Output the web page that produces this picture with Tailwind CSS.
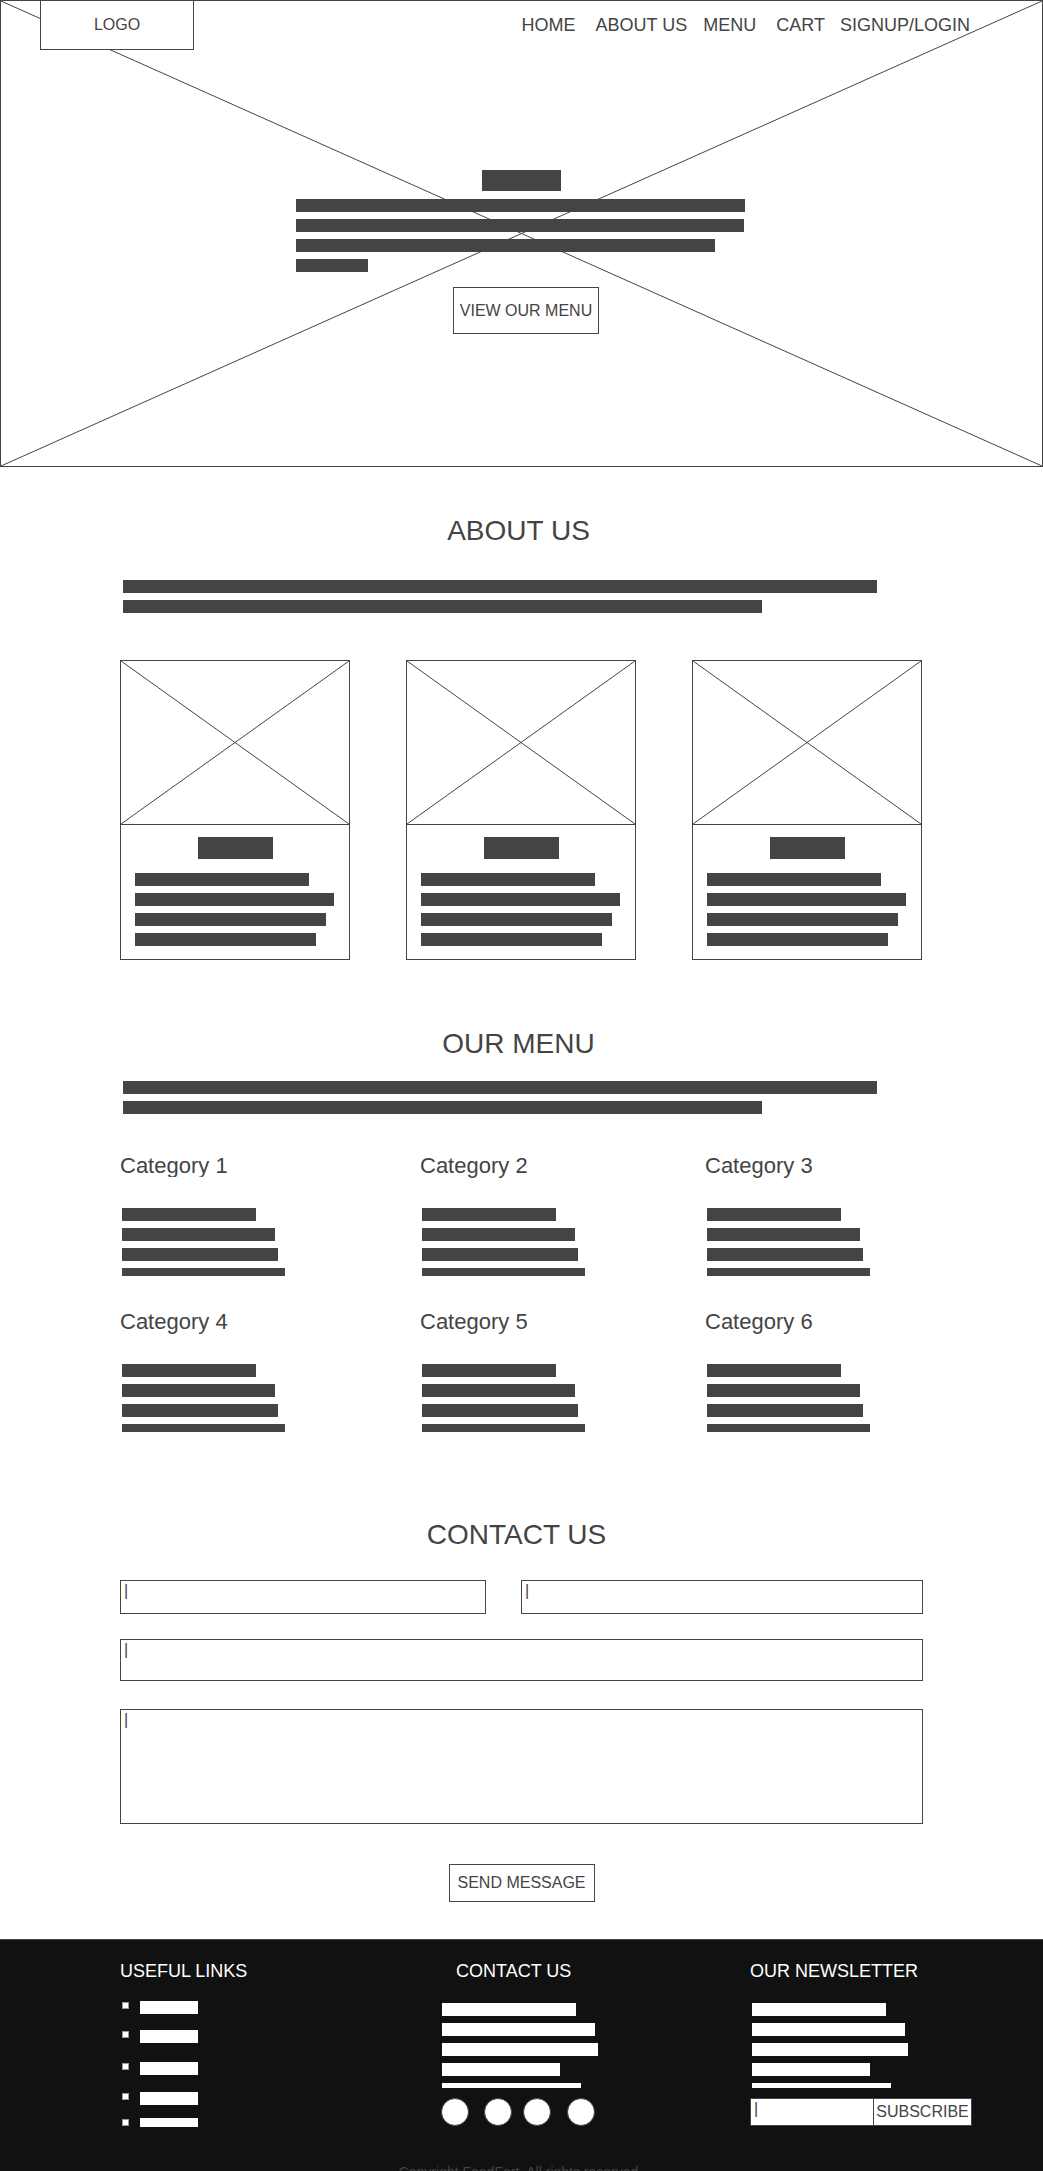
<!DOCTYPE html>
<html lang="en">
<head>
<meta charset="utf-8">
<meta name="viewport" content="width=device-width, initial-scale=1">
<title>FoodFort</title>
<script src="https://cdn.jsdelivr.net/npm/@tailwindcss/browser@4"></script>
</head>
<body class="bg-white font-['Liberation_Sans',Arial,sans-serif] text-[#444]">

<header class="relative h-[467px] border border-[#444]">
  <svg class="absolute inset-0 h-full w-full" viewBox="0 0 100 100" preserveAspectRatio="none" fill="none" stroke="#444" stroke-width="1" aria-hidden="true">
    <path d="M0 0L100 100M100 0L0 100" vector-effect="non-scaling-stroke"/>
  </svg>
  <div class="relative -mt-px flex items-start justify-between pr-[72px] pl-[39px]">
    <a href="#" class="flex h-[50px] w-[154px] items-center justify-center border border-[#444] bg-white text-base">LOGO</a>
    <nav class="flex pt-[13px] text-lg leading-6">
      <a href="#">HOME</a>
      <a href="#about" class="ml-5">ABOUT US</a>
      <a href="#menu" class="ml-4">MENU</a>
      <a href="#" class="ml-5">CART</a>
      <a href="#" class="ml-[15px]">SIGNUP/LOGIN</a>
    </nav>
  </div>
  <div class="relative mx-auto mt-[120px] flex w-[451px] max-w-full flex-col items-start gap-[7px]">
    <div class="mb-px ml-[186px] h-[21px] w-[79px] bg-[#444]"></div>
    <div class="h-[13px] w-[449px] bg-[#444]"></div>
    <div class="h-[13px] w-[448px] bg-[#444]"></div>
    <div class="h-[13px] w-[419px] bg-[#444]"></div>
    <div class="h-[13px] w-[72px] bg-[#444]"></div>
    <button class="mt-2 ml-[157px] h-[47px] w-[146px] border border-[#444] bg-white text-base whitespace-nowrap">VIEW OUR MENU</button>
  </div>
</header>

<main class="px-[120px]">
  <section id="about" class="pt-12">
    <h2 class="pr-1.5 text-center text-[28px] leading-8">ABOUT US</h2>
    <div class="mt-[33px] flex flex-col gap-[7px] pl-[3px]">
      <div class="h-[13px] w-[754px] max-w-full bg-[#444]"></div>
      <div class="h-[13px] w-[639px] max-w-full bg-[#444]"></div>
    </div>
    <div class="mt-[47px] grid grid-cols-3 gap-14 pr-px">
      <article class="border border-[#444]">
        <svg class="block h-[164px] w-full border-b border-[#444]" viewBox="0 0 100 100" preserveAspectRatio="none" fill="none" stroke="#444" aria-hidden="true"><path d="M0 0L100 100M100 0L0 100" vector-effect="non-scaling-stroke"/></svg>
        <div class="flex flex-col gap-[7px] px-3.5 pt-3 pb-[13px]">
          <div class="mb-[7px] h-[22px] w-[75px] self-center bg-[#444]"></div>
          <div class="h-[13px] w-[174px] bg-[#444]"></div>
          <div class="h-[13px] w-[199px] bg-[#444]"></div>
          <div class="h-[13px] w-[191px] bg-[#444]"></div>
          <div class="h-[13px] w-[181px] bg-[#444]"></div>
        </div>
      </article>
      <article class="border border-[#444]">
        <svg class="block h-[164px] w-full border-b border-[#444]" viewBox="0 0 100 100" preserveAspectRatio="none" fill="none" stroke="#444" aria-hidden="true"><path d="M0 0L100 100M100 0L0 100" vector-effect="non-scaling-stroke"/></svg>
        <div class="flex flex-col gap-[7px] px-3.5 pt-3 pb-[13px]">
          <div class="mb-[7px] h-[22px] w-[75px] self-center bg-[#444]"></div>
          <div class="h-[13px] w-[174px] bg-[#444]"></div>
          <div class="h-[13px] w-[199px] bg-[#444]"></div>
          <div class="h-[13px] w-[191px] bg-[#444]"></div>
          <div class="h-[13px] w-[181px] bg-[#444]"></div>
        </div>
      </article>
      <article class="border border-[#444]">
        <svg class="block h-[164px] w-full border-b border-[#444]" viewBox="0 0 100 100" preserveAspectRatio="none" fill="none" stroke="#444" aria-hidden="true"><path d="M0 0L100 100M100 0L0 100" vector-effect="non-scaling-stroke"/></svg>
        <div class="flex flex-col gap-[7px] px-3.5 pt-3 pb-[13px]">
          <div class="mb-[7px] h-[22px] w-[75px] self-center bg-[#444]"></div>
          <div class="h-[13px] w-[174px] bg-[#444]"></div>
          <div class="h-[13px] w-[199px] bg-[#444]"></div>
          <div class="h-[13px] w-[191px] bg-[#444]"></div>
          <div class="h-[13px] w-[181px] bg-[#444]"></div>
        </div>
      </article>
    </div>
  </section>

  <section id="menu" class="pt-[68px]">
    <h2 class="pr-1.5 text-center text-[28px] leading-8">OUR MENU</h2>
    <div class="mt-[21px] flex flex-col gap-[7px] pl-[3px]">
      <div class="h-[13px] w-[754px] max-w-full bg-[#444]"></div>
      <div class="h-[13px] w-[639px] max-w-full bg-[#444]"></div>
    </div>
    <div class="mt-10 grid grid-cols-[300fr_285fr_218fr] gap-y-[34px]">
      <div>
        <h3 class="h-[23px] overflow-hidden text-[22px] leading-6">Category 1</h3>
        <div class="mt-[31px] flex flex-col gap-[7px] pl-0.5">
          <div class="h-[13px] w-[134px] bg-[#444]"></div>
          <div class="h-[13px] w-[153px] bg-[#444]"></div>
          <div class="h-[13px] w-[156px] bg-[#444]"></div>
          <div class="h-2 w-[163px] bg-[#444]"></div>
        </div>
      </div>
      <div>
        <h3 class="h-[23px] text-[22px] leading-6">Category 2</h3>
        <div class="mt-[31px] flex flex-col gap-[7px] pl-0.5">
          <div class="h-[13px] w-[134px] bg-[#444]"></div>
          <div class="h-[13px] w-[153px] bg-[#444]"></div>
          <div class="h-[13px] w-[156px] bg-[#444]"></div>
          <div class="h-2 w-[163px] bg-[#444]"></div>
        </div>
      </div>
      <div>
        <h3 class="h-[23px] text-[22px] leading-6">Category 3</h3>
        <div class="mt-[31px] flex flex-col gap-[7px] pl-0.5">
          <div class="h-[13px] w-[134px] bg-[#444]"></div>
          <div class="h-[13px] w-[153px] bg-[#444]"></div>
          <div class="h-[13px] w-[156px] bg-[#444]"></div>
          <div class="h-2 w-[163px] bg-[#444]"></div>
        </div>
      </div>
      <div>
        <h3 class="h-[23px] text-[22px] leading-6">Category 4</h3>
        <div class="mt-[31px] flex flex-col gap-[7px] pl-0.5">
          <div class="h-[13px] w-[134px] bg-[#444]"></div>
          <div class="h-[13px] w-[153px] bg-[#444]"></div>
          <div class="h-[13px] w-[156px] bg-[#444]"></div>
          <div class="h-2 w-[163px] bg-[#444]"></div>
        </div>
      </div>
      <div>
        <h3 class="h-[23px] text-[22px] leading-6">Category 5</h3>
        <div class="mt-[31px] flex flex-col gap-[7px] pl-0.5">
          <div class="h-[13px] w-[134px] bg-[#444]"></div>
          <div class="h-[13px] w-[153px] bg-[#444]"></div>
          <div class="h-[13px] w-[156px] bg-[#444]"></div>
          <div class="h-2 w-[163px] bg-[#444]"></div>
        </div>
      </div>
      <div>
        <h3 class="h-[23px] text-[22px] leading-6">Category 6</h3>
        <div class="mt-[31px] flex flex-col gap-[7px] pl-0.5">
          <div class="h-[13px] w-[134px] bg-[#444]"></div>
          <div class="h-[13px] w-[153px] bg-[#444]"></div>
          <div class="h-[13px] w-[156px] bg-[#444]"></div>
          <div class="h-2 w-[163px] bg-[#444]"></div>
        </div>
      </div>
    </div>
  </section>

  <section id="contact" class="pt-[87px] pb-[37px]">
    <h2 class="pr-2.5 text-center text-[28px] leading-8">CONTACT US</h2>
    <form class="mt-[29px] flex flex-col">
      <div class="grid grid-cols-[366fr_402fr] gap-[35px]">
        <input type="text" aria-label="Name" value="|" class="block h-[34px] w-full min-w-0 border border-[#444] px-[3px] pb-3 text-base">
        <input type="text" aria-label="Email" value="|" class="block h-[34px] w-full min-w-0 border border-[#444] px-[3px] pb-3 text-base">
      </div>
      <input type="text" aria-label="Subject" value="|" class="mt-[25px] block h-[42px] w-full border border-[#444] px-[3px] pb-5 text-base">
      <textarea aria-label="Message" class="mt-7 block h-[115px] w-full resize-none border border-[#444] px-[3px] text-base leading-5">|</textarea>
      <button type="button" class="mt-10 h-[38px] w-[146px] self-center border border-[#444] bg-white text-base whitespace-nowrap">SEND MESSAGE</button>
    </form>
  </section>
</main>

<footer class="border-t border-[#444] bg-[#111] pt-[19px]">
  <div class="grid grid-cols-[321fr_309fr_222fr] pr-[71px] pl-[120px]">
    <div class="min-w-0">
      <h4 class="text-lg leading-6 text-white">USEFUL LINKS</h4>
      <ul class="mt-[18px] pl-0.5">
        <li class="flex gap-[11px]"><span class="mt-px h-[7px] w-[7px] border border-[#999] bg-white"></span><a href="#" aria-label="Link 1" class="h-[13px] w-[58px] bg-white"></a></li>
        <li class="mt-4 flex gap-[11px]"><span class="mt-px h-[7px] w-[7px] border border-[#999] bg-white"></span><a href="#" aria-label="Link 2" class="h-[13px] w-[58px] bg-white"></a></li>
        <li class="mt-[19px] flex gap-[11px]"><span class="mt-px h-[7px] w-[7px] border border-[#999] bg-white"></span><a href="#" aria-label="Link 3" class="h-[13px] w-[58px] bg-white"></a></li>
        <li class="mt-[17px] flex gap-[11px]"><span class="mt-px h-[7px] w-[7px] border border-[#999] bg-white"></span><a href="#" aria-label="Link 4" class="h-[13px] w-[58px] bg-white"></a></li>
        <li class="mt-[13px] flex gap-[11px]"><span class="mt-px h-[7px] w-[7px] border border-[#999] bg-white"></span><a href="#" aria-label="Link 5" class="h-[9px] w-[58px] bg-white"></a></li>
      </ul>
    </div>
    <div class="min-w-0">
      <h4 class="pl-[15px] text-lg leading-6 text-white">CONTACT US</h4>
      <div class="mt-5 flex flex-col gap-[7px] pl-px">
        <div class="h-[13px] w-[134px] bg-white"></div>
        <div class="h-[13px] w-[153px] bg-white"></div>
        <div class="h-[13px] w-[156px] bg-white"></div>
        <div class="h-[13px] w-[118px] bg-white"></div>
        <div class="h-[5px] w-[139px] bg-white"></div>
      </div>
      <div class="mt-2.5 flex">
        <a href="#" aria-label="Social 1" class="h-7 w-7 rounded-full border border-[#444] bg-white"></a>
        <a href="#" aria-label="Social 2" class="ml-[15px] h-7 w-7 rounded-full border border-[#444] bg-white"></a>
        <a href="#" aria-label="Social 3" class="ml-[11px] h-7 w-7 rounded-full border border-[#444] bg-white"></a>
        <a href="#" aria-label="Social 4" class="ml-4 h-7 w-7 rounded-full border border-[#444] bg-white"></a>
      </div>
    </div>
    <div class="min-w-0">
      <h4 class="text-lg leading-6 whitespace-nowrap text-white">OUR NEWSLETTER</h4>
      <div class="mt-5 flex flex-col gap-[7px] pl-0.5">
        <div class="h-[13px] w-[134px] bg-white"></div>
        <div class="h-[13px] w-[153px] bg-white"></div>
        <div class="h-[13px] w-[156px] bg-white"></div>
        <div class="h-[13px] w-[118px] bg-white"></div>
        <div class="h-[5px] w-[139px] bg-white"></div>
      </div>
      <form class="mt-2.5 flex">
        <input type="text" aria-label="Email for newsletter" value="|" class="block h-7 w-0 min-w-0 flex-1 border border-r-0 border-[#444] bg-white px-[3px] pb-1.5 text-base leading-5">
        <button type="button" class="h-7 w-[99px] shrink-0 border border-[#444] bg-white text-base leading-6">SUBSCRIBE</button>
      </form>
    </div>
  </div>
  <p class="mt-[35px] h-2.5 overflow-hidden pr-1.5 text-center text-sm">Copyright FoodFort. All rights reserved</p>
</footer>

</body>
</html>
